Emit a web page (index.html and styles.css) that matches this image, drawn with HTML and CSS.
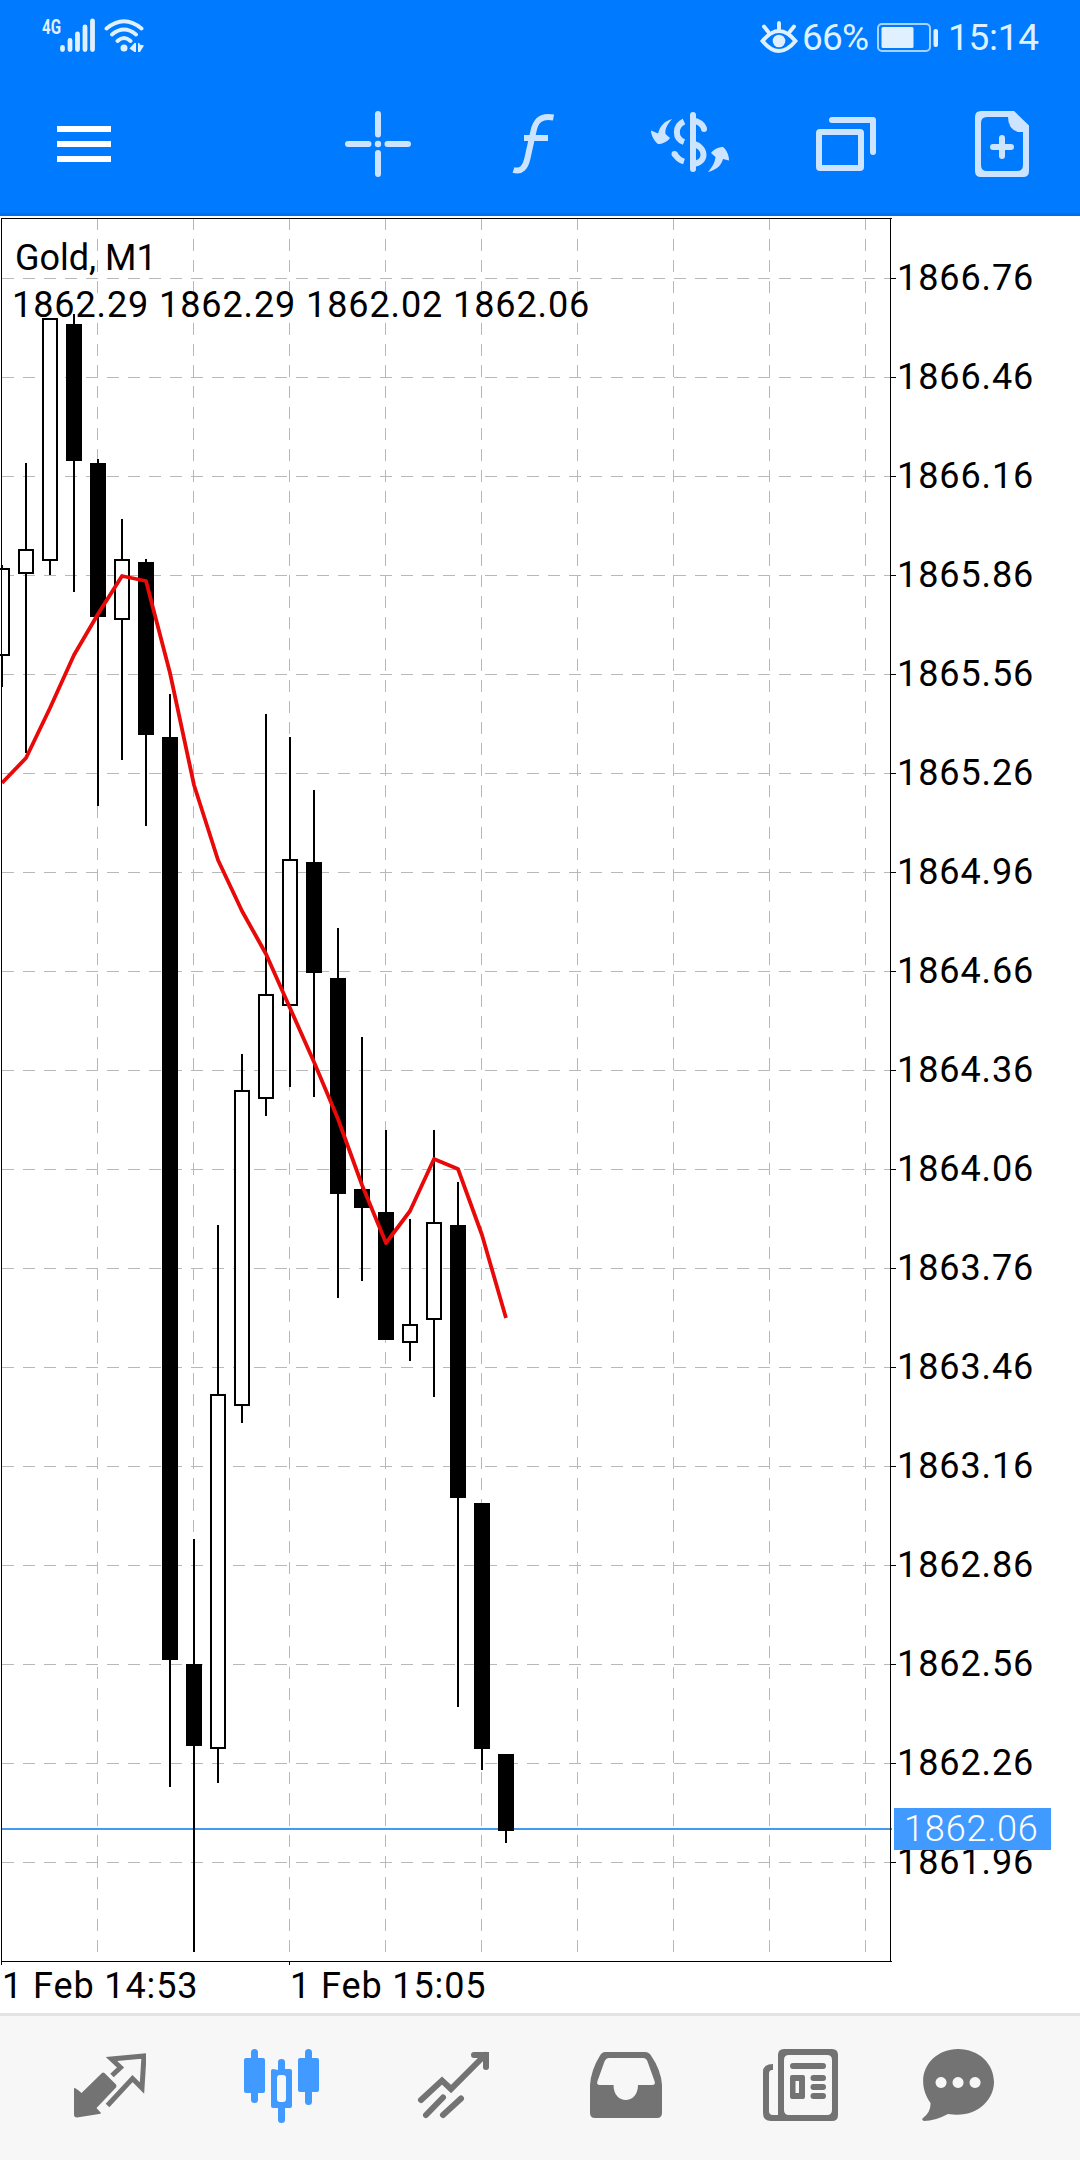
FILE: index.html
```
<!DOCTYPE html>
<html lang="en">
<head>
  <meta charset="UTF-8">
  <meta name="viewport" content="width=device-width, initial-scale=1.0">
  <title>Gold, M1</title>
  <link rel="stylesheet" href="styles.css">
</head>
<body>
  <header class="header">
    <div class="status-bar">
      <div class="status-left">
        <svg class="signal" width="110" height="44" viewBox="0 0 110 44">
          <text class="net" x="0" y="20" textLength="19" lengthAdjust="spacingAndGlyphs">4G</text>
          <path class="bars" d="M20.5 35.5v-2M28 35.5v-9M35.5 35.5v-15.500M43 35.500v-22.500M50.500 35.500v-28.500"/>
          <path class="waves" d="M64.500 14.500q17.500-14.500 35 0M70 20.500q12-10 24 0M75.500 27q6.500-6 13 0"/>
          <circle class="lit" cx="82" cy="34" r="3.500"/>
          <path class="lit" d="M87.500 34.500l5-5.500h1.500v9h-1.500zM96 29h1.500v1.500l4.500 1-4 6.500h-2z"/>
        </svg>
      </div>
      <div class="status-right">
        <svg width="38" height="36" viewBox="0 0 38 36">
          <path class="eye" d="M2.500 21q16.500-20 33 0q-16.500 20-33 0zM19 9V3M8 11.500L4 6.500M30 11.500l4-5"/>
          <circle class="lit" cx="19" cy="21" r="6.300"/>
        </svg>
        <span class="percent">66%</span>
        <svg class="battery" width="62" height="32" viewBox="0 0 62 32">
          <rect class="cell" x="2" y="2" width="52" height="27" rx="4"/>
          <rect class="lit" x="5.500" y="5" width="32" height="21" rx="1.500"/>
          <rect class="lit" x="57.500" y="7" width="4.500" height="18" rx="2"/>
        </svg>
        <span class="clock">15:14</span>
      </div>
    </div>
    <nav class="toolbar">
      <svg class="menu" width="56" height="68" viewBox="0 0 56 68">
        <path d="M1 16h54v6H1zM1 31h54v6H1zM1 46h54v6H1z"/>
      </svg>
      <div class="tools">
        <svg width="68" height="68" viewBox="0 0 68 68">
          <path class="line" d="M34 4v20.500M34 43v21M4 34h20.500M43.500 34h20.500"/>
          <circle class="tint" cx="34" cy="34" r="3.200"/>
        </svg>
        <svg width="44" height="68" viewBox="0 0 44 68">
          <path class="line fx" d="M1.500 60c8 2.500 12-3 14-12l6-27c2-9.500 7-16 20-13.500M12 28h24"/>
        </svg>
        <svg width="80" height="68" viewBox="0 0 80 68">
          <path class="line" d="M42 5v54"/>
          <path class="line fx" d="M33 11.500c-9.500 4.500-9.500 17 0 20.500M42 10.500c6 1 9.500 4 11 8M42 33.500c14 4 14 19 0 20.500M33 51.500c-5-1.500-7.500-4-9.500-8"/>
          <circle class="tint" cx="53" cy="19" r="3"/>
          <circle class="tint" cx="23.500" cy="44" r="3"/>
          <path class="tint" d="M21 9c-6 7-7 11-6.500 15l4.500 4c-3 4-8 6-12 6C3 31 0 25 0 20.500l7 3c2-7 6-12.500 14-14.500zM57 62c6-7 7-11 7.500-15l-4.500-4c3-4 8-6 12-6 4 3 6 9 6 13.500l-6-1.500c-2 7-7 11-15 13z"/>
        </svg>
        <svg width="62" height="68" viewBox="0 0 62 68">
          <rect class="line" x="4" y="22" width="42" height="36" rx="1"/>
          <path class="line" d="M17 10h41v32"/>
        </svg>
        <svg width="54" height="68" viewBox="0 0 54 68">
          <path class="tint" fill-rule="evenodd" d="M5 1H39L54 15.500V61q0 6-6 6H6q-6 0-6-6V7Q0 1 6 1zM12 7q-6 0-6 6V55q0 6 6 6H42q6 0 6-6V22H43Q33 19 33 7z"/>
          <path class="line" d="M27 28v18M18 37h18"/>
        </svg>
      </div>
    </nav>
  </header>

  <main class="chart">
    <svg id="chart" width="1080" height="1797" viewBox="0 216 1080 1797">
      <g id="grid"></g>
      <rect class="backdrop" x="10" y="295" width="580" height="26"/>
      <path class="price-line" d="M2 1829H892"/>
      <g id="candles"></g>
      <polyline id="average"/>
      <path class="frame" d="M1 218.500H892M1.500 218V1965M1 1961.500H892M890.500 218V1962M289.500 1962v3"/>
      <g class="labels">
        <text class="symbol" x="15" y="270">Gold, M1</text>
        <text x="12" y="317">1862.29 1862.29 1862.02 1862.06</text>
        <text x="2" y="1998">1 Feb 14:53</text>
        <text x="290" y="1998">1 Feb 15:05</text>
      </g>
      <g id="prices" class="labels"></g>
      <rect class="badge" x="894" y="1808" width="157" height="42"/>
      <text class="badge-text" x="904" y="1841">1862.06</text>
    </svg>
  </main>

  <footer class="tabs">
    <svg width="74" height="80" viewBox="0 0 74 80">
      <path d="M30 25q1-1 2.500 0L44 36.500q1 1.500 0 3L24.500 60l4.500 5q-.5 1-2 1L5 69.500q-3 0-3-3V40q2 0 7.500 5z"/>
      <path class="open" d="M40 27.500l8.500-8L39.500 11 72 8l-2 32-9.500-9.500L35.500 57.500"/>
    </svg>
    <svg class="active" width="76" height="80" viewBox="0 0 76 80">
      <rect x="1" y="10" width="21" height="35" rx="2"/><rect x="8" y="1" width="7" height="54" rx="3.500"/>
      <rect x="55" y="10" width="21" height="34" rx="2"/><rect x="62" y="1" width="7" height="56" rx="3.500"/>
      <path fill-rule="evenodd" d="M35 22V14q0-3 3.500-3t3.500 3v7h5q2 0 2 2V58q0 2-2 2H42V72q0 3-3.500 3T35 72V60H30q-2 0-2-2V23q0-2 2-2zM37 27q-3 0-3 3V51q0 3 3 3h3q3 0 3-3V30q0-3-3-3z"/>
    </svg>
    <svg width="74" height="80" viewBox="0 0 74 80">
      <path class="trend" d="M5 52L26 32.500l9 8.500L69 7M58 7h12v12M10 67L27 49.500M27 67L45 50.500"/>
    </svg>
    <svg width="74" height="80" viewBox="0 0 74 80">
      <path fill-rule="evenodd" d="M16 4H56q4 0 6 3.500Q72 22 73 37V65q0 5-5 5H6q-5 0-5-5V37Q2 22 11 7.500 13 4 16 4zM20 10q-3 0-4.500 3.500L8.500 33Q7 37 11 37H24.500c0 20 24.500 20 24.500 0H63q4 0 2.500-4L58.500 13.500Q57.500 10 54 10z"/>
    </svg>
    <svg width="76" height="80" viewBox="0 0 76 80">
      <path fill-rule="evenodd" d="M22 1H70q6 0 6 6V67q0 6-6 6H9q-8 0-8-8V24q0-8 10-8v6H10q-3 0-3 4V63q0 4 4 4h5V7q0-6 6-6zM27 7q-5 0-5 5V62q0 5 5 5H65q5 0 5-5V12q0-5-5-5zM30 27h11q2 0 2 2v20q0 2-2 2H30q-2 0-2-2V29q0-2 2-2zM33.500 33V45h3.500V33z"/>
      <path class="rule" d="M31 18H61M51.500 30H61M51.500 39H61M51.500 48H61"/>
    </svg>
    <svg width="74" height="80" viewBox="0 0 74 80">
      <path fill-rule="evenodd" d="M37 1C58 1 73 16 73 34S55 71 27 66Q14 73 3 73q-3-1-1-3 8-6 7.500-15C-9 28 10 1 37 1zM20 29a5.500 5.500 0 1 0 .1 0zM37 29a5.500 5.500 0 1 0 .1 0zM54 29a5.500 5.500 0 1 0 .1 0z"/>
    </svg>
  </footer>

  <script src="script.js"></script>
</body>
</html>
```
FILE: styles.css
```
* {
  box-sizing: border-box;
}
body {
  margin: 0;
  width: 1080px;
  height: 2160px;
  display: flex;
  flex-direction: column;
  background-color: #ffffff;
  font-family: Roboto, "Liberation Sans", sans-serif;
  overflow: hidden;
}
svg {
  display: block;
  flex: none;
}

/* header */
.header {
  height: 216px;
  background-color: #007aff;
  border-bottom: 3px solid #006ee6;
}
.status-bar {
  height: 72px;
  padding: 0 40px 0 42px;
  display: flex;
  justify-content: space-between;
  align-items: center;
  color: #dff0ff;
}
.status-right {
  padding-top: 3px;
  display: flex;
  align-items: center;
  font-size: 37px;
  line-height: 44px;
}
.percent {
  margin-left: 4px;
  width: 66px;
  white-space: nowrap;
  letter-spacing: -0.8px;
}
.battery {
  margin-left: 8px;
}
.clock {
  margin-left: 10px;
  width: 92px;
  white-space: nowrap;
  letter-spacing: -0.3px;
}
.lit {
  fill: #e0f0ff;
}
.net {
  font-size: 21px;
  font-weight: bold;
  fill: #dff0ff;
}
.bars, .waves, .eye {
  fill: none;
  stroke: #dff0ff;
  stroke-linecap: round;
  stroke-width: 4.8;
}
.waves, .eye {
  stroke-width: 3.9;
}
.cell {
  fill: none;
  stroke: #a5d3ff;
  stroke-width: 2;
}
.toolbar {
  height: 141px;
  padding: 38px 51px 0 56px;
  display: flex;
  justify-content: space-between;
}
.menu {
  fill: #ffffff;
}
.tools {
  display: grid;
  grid-template-columns: 168px 139px 164px 160px 54px;
}
.tint {
  fill: #cce4ff;
}
.line {
  fill: none;
  stroke: #cce4ff;
  stroke-width: 6;
  stroke-linecap: round;
  stroke-linejoin: round;
}
.fx {
  stroke-linecap: butt;
}

/* chart */
.chart {
  height: 1797px;
}
#grid path {
  stroke: #b8b8b8;
  stroke-dasharray: 12 9;
}
.backdrop {
  fill: #ffffff;
}
.price-line {
  stroke: #4499f0;
  stroke-width: 2;
}
.wick, .bear {
  fill: #000000;
}
.bull {
  fill: #ffffff;
  stroke: #000000;
  stroke-width: 2;
}
#average {
  fill: none;
  stroke: #e80909;
  stroke-width: 3.8;
  stroke-linejoin: round;
}
.frame {
  fill: none;
  stroke: #000000;
}
.labels, .badge-text {
  font-size: 36px;
  letter-spacing: 0.9px;
}
.labels .symbol {
  letter-spacing: 0;
}
.badge {
  fill: #409aff;
}
.badge-text {
  fill: #ffffff;
  font-weight: 300;
}

/* bottom tabs */
.tabs {
  height: 147px;
  padding: 32px 0 0 72px;
  display: grid;
  grid-template-columns: 171px 173px 173px 173px 159px 74px;
  border-top: 3px solid #e4e4e4;
  background-color: #f7f7f7;
  fill: #737373;
}
.tabs .active {
  fill: #409aff;
}
.open, .trend, .rule {
  fill: none;
  stroke: #737373;
  stroke-width: 5;
}
.trend, .rule {
  stroke-width: 6;
  stroke-linecap: round;
}
```
FILE: script.js
```
// high, body top, body bottom, low, 1 = bullish
const candles = [
  [565, 568, 656, 687, 1], [463, 549, 574, 753, 1], [318, 318, 561, 575, 1],
  [314, 324, 461, 592, 0], [459, 463, 617, 806, 0], [519, 559, 620, 760, 1],
  [559, 562, 735, 826, 0], [694, 737, 1660, 1787, 0], [1539, 1664, 1746, 1952, 0],
  [1225, 1394, 1749, 1783, 1], [1054, 1090, 1406, 1423, 1], [714, 994, 1099, 1116, 1],
  [737, 859, 1006, 1087, 1], [790, 862, 973, 1097, 0], [928, 978, 1194, 1298, 0],
  [1037, 1189, 1208, 1281, 0], [1130, 1212, 1340, 1340, 0], [1219, 1324, 1343, 1361, 1],
  [1130, 1222, 1320, 1397, 1], [1182, 1225, 1498, 1707, 0], [1503, 1503, 1749, 1770, 0],
  [1754, 1754, 1831, 1843, 0]
];
const average = [783, 758, 708, 655, 614, 576, 581, 673, 785, 860, 911, 954, 1008,
  1062, 1119, 1185, 1243, 1211, 1159, 1169, 1235, 1318];

let grid = '';
let prices = '';
let ticks = '';
for (let x = 97; x < 890; x += 96) {
  grid += `<path d="M${x + 0.5} 218V1952"/>`;
}
for (let i = 0; i < 17; i++) {
  const y = 278 + i * 99;
  grid += `<path d="M2 ${y + 0.5}H890"/>`;
  ticks += `M890 ${y + 0.5}h6`;
  prices += `<text x="897" y="${y + 12}">${(1866.76 - i * 0.3).toFixed(2)}</text>`;
}
document.getElementById('grid').innerHTML = grid;
document.getElementById('prices').innerHTML = prices + `<path class="frame" d="${ticks}"/>`;

let bodies = '';
candles.forEach(([high, top, bottom, low, up], i) => {
  // the first candle is cut by the left edge
  const x = 2 + i * 24;
  bodies += `<rect class="wick" x="${x - 1}" y="${high}" width="2" height="${low - high}"/>`;
  bodies += up
    ? `<rect class="bull" x="${x - 7}" y="${top + 1}" width="14" height="${bottom - top - 2}"/>`
    : `<rect class="bear" x="${x - 8}" y="${top}" width="16" height="${bottom - top}"/>`;
});
document.getElementById('candles').innerHTML = bodies;
document.getElementById('average').setAttribute('points',
  average.map((y, i) => `${2 + i * 24},${y}`).join(' '));
```
